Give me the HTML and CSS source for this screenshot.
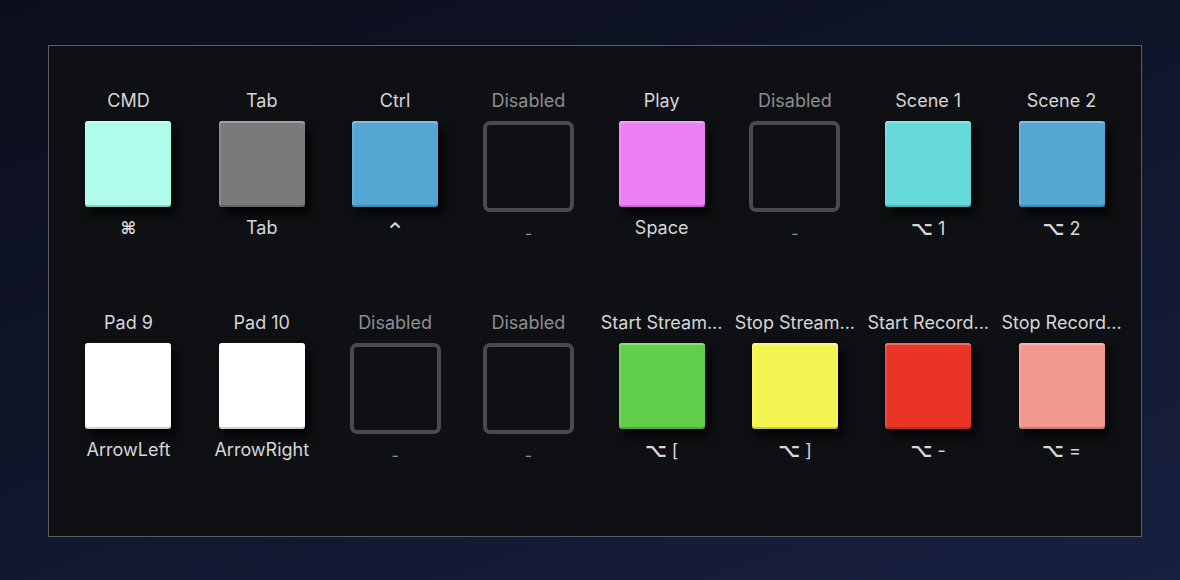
FILE: index.html
```html
<!DOCTYPE html>
<html>
<head>
<meta charset="utf-8">
<link rel="stylesheet" href="styles.css">
</head>
<body>
<div class="panel">
  <div class="grid">
    <div class="cell"><div class="label">CMD</div><div class="slot"><div class="pad c-cmd"></div></div><div class="sub"><span class="sym">⌘</span></div></div>
    <div class="cell"><div class="label">Tab</div><div class="slot"><div class="pad c-tab"></div></div><div class="sub">Tab</div></div>
    <div class="cell"><div class="label">Ctrl</div><div class="slot"><div class="pad c-blue"></div></div><div class="sub"><span class="sym ctrl">⌃</span></div></div>
    <div class="cell off"><div class="label">Disabled</div><div class="slot"><div class="empty"></div></div><div class="sub"><span class="dash">-</span></div></div>
    <div class="cell"><div class="label">Play</div><div class="slot"><div class="pad c-play"></div></div><div class="sub">Space</div></div>
    <div class="cell off"><div class="label">Disabled</div><div class="slot"><div class="empty"></div></div><div class="sub"><span class="dash">-</span></div></div>
    <div class="cell"><div class="label">Scene 1</div><div class="slot"><div class="pad c-teal"></div></div><div class="sub"><span class="opt">⌥</span> 1</div></div>
    <div class="cell"><div class="label">Scene 2</div><div class="slot"><div class="pad c-blue"></div></div><div class="sub"><span class="opt">⌥</span> 2</div></div>

    <div class="cell"><div class="label">Pad 9</div><div class="slot"><div class="pad c-white"></div></div><div class="sub">ArrowLeft</div></div>
    <div class="cell"><div class="label">Pad 10</div><div class="slot"><div class="pad c-white"></div></div><div class="sub">ArrowRight</div></div>
    <div class="cell off"><div class="label">Disabled</div><div class="slot"><div class="empty"></div></div><div class="sub"><span class="dash">-</span></div></div>
    <div class="cell off"><div class="label">Disabled</div><div class="slot"><div class="empty"></div></div><div class="sub"><span class="dash">-</span></div></div>
    <div class="cell"><div class="label">Start Stream...</div><div class="slot"><div class="pad c-green"></div></div><div class="sub"><span class="opt">⌥</span> [</div></div>
    <div class="cell"><div class="label">Stop Stream...</div><div class="slot"><div class="pad c-yellow"></div></div><div class="sub"><span class="opt">⌥</span> ]</div></div>
    <div class="cell"><div class="label">Start Record...</div><div class="slot"><div class="pad c-red"></div></div><div class="sub"><span class="opt">⌥</span> -</div></div>
    <div class="cell"><div class="label">Stop Record...</div><div class="slot"><div class="pad c-salmon"></div></div><div class="sub"><span class="opt">⌥</span> =</div></div>
  </div>
</div>
</body>
</html>
```

FILE: styles.css
```css
* { box-sizing: border-box; }
html, body { margin: 0; height: 100%; }
body {
  width: 1180px;
  height: 580px;
  overflow: hidden;
  padding: 45px 0 0 48px;
  background: linear-gradient(160deg, #0b0e1b 0%, #10162b 50%, #172041 100%);
  font-family: Inter, "DejaVu Sans", sans-serif;
}
.panel {
  width: 1094px;
  height: 492px;
  background: #0f1013;
  border: 1px solid #5b5b60;
  padding: 44px 0 0 0;
}
.grid {
  display: grid;
  grid-template-columns: repeat(8, 133.3px);
  justify-content: center;
  row-gap: 73px;
}
.cell {
  display: flex;
  flex-direction: column;
  align-items: center;
}
.label, .sub {
  height: 22px;
  line-height: 22px;
  font-size: 18px;
  color: #d6d6d8;
  white-space: nowrap;
}
.label { margin-bottom: 9px; }
.sub { margin-top: 10px; }
.off .label { color: #8d8d90; }
.off .sub { color: #8d8d90; }
.opt { font-family: "DejaVu Sans", sans-serif; font-size: 19px; font-weight: bold; }
.sym { font-family: "DejaVu Sans", sans-serif; font-size: 17px; font-weight: bold; }
.sym.ctrl { font-size: 24px; font-weight: normal; display: inline-block; vertical-align: -6px; }
.dash { display: inline-block; vertical-align: -5px; font-size: 16px; }
.slot {
  width: 86px;
  height: 86px;
  display: flex;
  align-items: center;
  justify-content: center;
}
.pad {
  width: 86px;
  height: 86px;
  border-radius: 3px;
  box-shadow:
    inset 0 2px 0 rgba(255,255,255,0.28),
    inset 2px 0 0 rgba(255,255,255,0.12),
    inset 0 -2px 0 rgba(0,0,0,0.18),
    5px 7px 12px rgba(0,0,0,0.85);
}
.empty {
  flex: none;
  width: 91px;
  height: 91px;
  margin-top: 4px;
  border: 4px solid #4a4a4c;
  border-radius: 7px;
}
.c-cmd { background: #affceb; }
.c-tab { background: #7a7a7a; }
.c-blue { background: #52a7d3; }
.c-play { background: #ee80f6; }
.c-teal { background: #66d9da; }
.c-white { background: #ffffff; }
.c-green { background: #62cf4b; }
.c-yellow { background: #f4f453; }
.c-red { background: #ea3526; }
.c-salmon { background: #f09890; }
```
